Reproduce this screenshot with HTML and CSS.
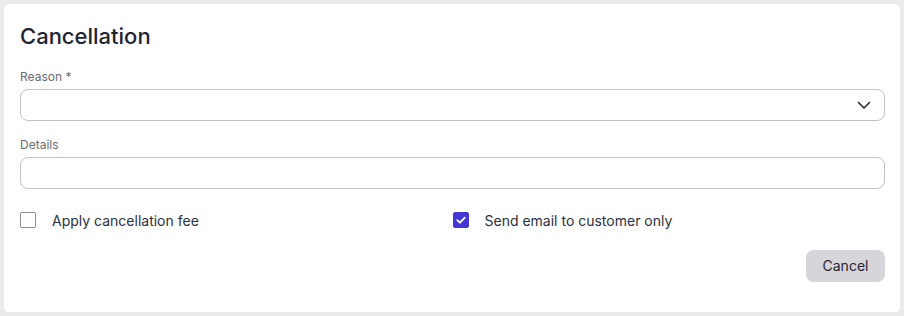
FILE: index.html
```html
<!DOCTYPE html>
<html>
<head>
<meta charset="utf-8">
<link rel="stylesheet" href="styles.css">
</head>
<body>
<div class="card">
  <h1 class="title">Cancellation</h1>
  <div class="field">
    <label class="label">Reason *</label>
    <div class="select">
      <svg class="chev" width="16" height="16" viewBox="0 0 16 16"><path d="M2.5 5.5 L8 11 L13.5 5.5" fill="none" stroke="#1e2540" stroke-width="1.6" stroke-linecap="round" stroke-linejoin="round"/></svg>
    </div>
  </div>
  <div class="field">
    <label class="label">Details</label>
    <div class="input"></div>
  </div>
  <div class="checks">
    <div class="check">
      <span class="box"></span>
      <span class="ctext">Apply cancellation fee</span>
    </div>
    <div class="check">
      <span class="box on"><svg width="16" height="16" viewBox="0 0 16 16"><path d="M4.3 8.2 L6.9 10.7 L11.8 5.6" fill="none" stroke="#fff" stroke-width="1.8" stroke-linecap="round" stroke-linejoin="round"/></svg></span>
      <span class="ctext">Send email to customer only</span>
    </div>
  </div>
  <div class="actions">
    <button class="btn">Cancel</button>
  </div>
</div>
</body>
</html>
```
FILE: styles.css
```css
* { box-sizing: border-box; }
body {
  margin: 0;
  padding: 4px;
  background: #ebebed;
  font-family: Inter, "Noto Sans", sans-serif;
}
.card {
  width: 896px;
  height: 308px;
  background: #fff;
  border-radius: 4px;
  box-shadow: 0 0 1px rgba(0,0,0,0.15);
  padding: 16px 15px 30px 16px;
}
.title {
  margin: 0;
  font-size: 22px;
  line-height: 33px;
  font-weight: 500;
  color: #1e2433;
}
.field { margin-top: 16px; }
.field + .field { margin-top: 16px; }
.label {
  display: block;
  font-size: 12px;
  line-height: 16px;
  color: #6b6b73;
  margin-bottom: 4px;
}
.select, .input {
  height: 32px;
  border: 1px solid #c2c2c6;
  border-radius: 8px;
  background: #fff;
}
.select {
  display: flex;
  align-items: center;
  justify-content: flex-end;
  padding-right: 12px;
}
.chev { display: block; }
.checks {
  margin-top: 21px;
  display: grid;
  grid-template-columns: 1fr 1fr;
}
.check {
  display: flex;
  align-items: center;
  height: 20px;
  gap: 16px;
}
.box {
  width: 16px;
  height: 16px;
  border: 1px solid #8c8c93;
  border-radius: 2px;
  background: #fff;
  display: flex;
}
.box.on {
  background: #4338d6;
  border-color: #4338d6;
}
.box.on svg { margin: -1px; }
.ctext {
  font-size: 14px;
  color: #2b3040;
}
.actions {
  margin-top: 20px;
  display: flex;
  justify-content: flex-end;
}
.btn {
  height: 32px;
  width: 79px;
  border: none;
  border-radius: 8px;
  background: #d5d5da;
  font-family: Inter, "Noto Sans", sans-serif;
  font-size: 14px;
  line-height: 16px;
  padding: 0 0 1px;
  color: #1e2433;
}
```
